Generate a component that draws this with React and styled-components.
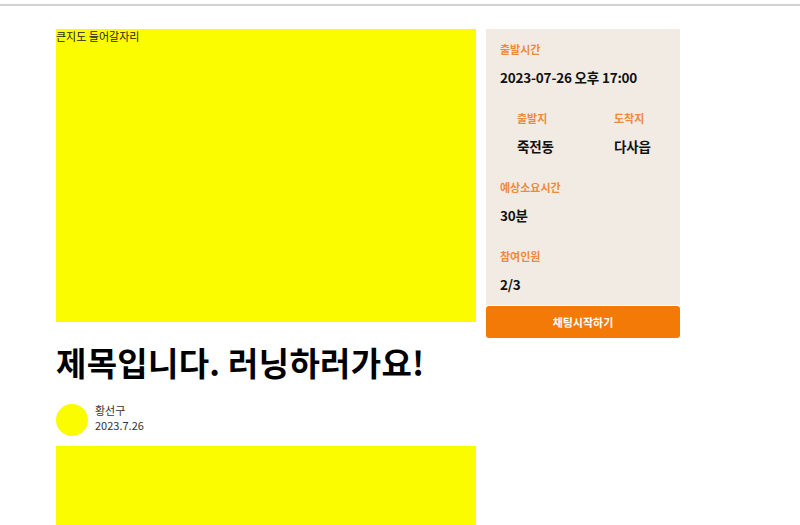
import React from 'react';
import styled, { createGlobalStyle } from 'styled-components';

const GlobalStyle = createGlobalStyle`
  html, body {
    margin: 0;
    padding: 0;
    background: #ffffff;
  }
  body {
    font-family: "Noto Sans CJK KR", "Noto Sans", sans-serif;
    color: #111;
  }
`;

const TopBar = styled.header`
  height: 4px;
  border-bottom: 2px solid #d2d2d2;
`;

const Page = styled.main`
  display: flex;
  align-items: flex-start;
  gap: 10px;
  padding: 23px 0 0 56px;
`;

const Content = styled.section`
  width: 420px;
  display: flex;
  flex-direction: column;
`;

const YellowBox = styled.div`
  background: #fcfc00;
  height: ${(p) => p.$h}px;
  font-size: 11px;
  line-height: 14px;
  color: #222;
`;

const Title = styled.h1`
  margin: 18px 0 20px;
  font-size: 33px;
  line-height: 44px;
  font-weight: 700;
  letter-spacing: 0.3px;
  color: #000;
`;

const Writer = styled.div`
  display: flex;
  align-items: flex-start;
  gap: 7px;
  margin-bottom: 10px;
`;

const Avatar = styled.div`
  width: 32px;
  height: 32px;
  border-radius: 50%;
  background: #fcfc00;
`;

const WriterInfo = styled.div`
  display: flex;
  flex-direction: column;
  margin-top: -1px;
  font-size: 11px;
  line-height: 15px;
  color: #333;
`;

const Aside = styled.aside`
  width: 194px;
  display: flex;
  flex-direction: column;
  gap: 1px;
`;

const Panel = styled.div`
  background: #f2ebe3;
`;

const Section = styled.div`
  padding: 10px 14px 11px;
`;

const Places = styled.div`
  display: grid;
  grid-template-columns: 97px 97px;
  padding: 10px 14px 11px;
`;

const Place = styled.div`
  padding-left: 17px;
`;

const Label = styled.div`
  font-size: 11px;
  line-height: 20px;
  font-weight: 700;
  color: #ee8a3c;
  margin-bottom: 8px;
`;

const Value = styled.div`
  font-size: 13.5px;
  line-height: 20px;
  font-weight: 700;
  letter-spacing: -0.2px;
  color: #111;
`;

const ChatButton = styled.button`
  height: 32px;
  border: none;
  border-radius: 3px;
  background: #f37a06;
  color: #fff;
  font-family: inherit;
  font-size: 11px;
  font-weight: 700;
  cursor: pointer;
`;

export default function App() {
  return (
    <>
      <GlobalStyle />
      <TopBar />
      <Page>
        <Content>
          <YellowBox $h={293}>큰지도 들어갈자리</YellowBox>
          <Title>제목입니다. 러닝하러가요!</Title>
          <Writer>
            <Avatar />
            <WriterInfo>
              <span>황선구</span>
              <span>2023.7.26</span>
            </WriterInfo>
          </Writer>
          <YellowBox $h={120} />
        </Content>
        <Aside>
          <Panel>
            <Section>
              <Label>출발시간</Label>
              <Value>2023-07-26 오후 17:00</Value>
            </Section>
            <Places>
              <Place>
                <Label>출발지</Label>
                <Value>죽전동</Value>
              </Place>
              <Place>
                <Label>도착지</Label>
                <Value>다사읍</Value>
              </Place>
            </Places>
            <Section>
              <Label>예상소요시간</Label>
              <Value>30분</Value>
            </Section>
            <Section>
              <Label>참여인원</Label>
              <Value>2/3</Value>
            </Section>
          </Panel>
          <ChatButton>채팅시작하기</ChatButton>
        </Aside>
      </Page>
    </>
  );
}
